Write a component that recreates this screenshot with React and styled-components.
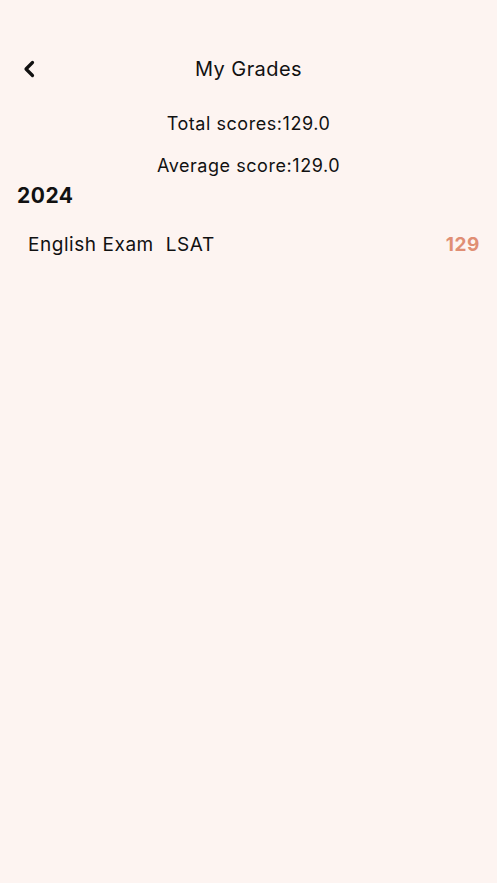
import React from "react";
import styled, { createGlobalStyle } from "styled-components";

const Global = createGlobalStyle`
  html, body { margin: 0; padding: 0; background: #fdf4f1; }
  body { font-family: Inter, "Noto Sans", sans-serif; color: #111; }
`;

const Page = styled.div`
  min-height: 883px;
  background: #fdf4f1;
  display: flex;
  flex-direction: column;
`;

const NavBar = styled.div`
  height: 44px;
  margin-top: 47px;
  display: grid;
  grid-template-columns: 60px 1fr 60px;
  align-items: center;
`;

const BackButton = styled.button`
  border: none;
  background: none;
  padding: 0 0 0 22px;
  display: flex;
  align-items: center;
  cursor: pointer;
`;

const Title = styled.div`
  text-align: center;
  font-size: 20px;
  letter-spacing: 0.45px;
  color: #111;
`;

const Summary = styled.div`
  text-align: center;
  font-size: 18px;
  letter-spacing: 0.55px;
  line-height: 22px;
  margin-top: ${(p) => p.$top}px;
`;

const Year = styled.div`
  font-size: 21px;
  font-weight: 700;
  letter-spacing: 0.5px;
  margin: 6px 0 0 17px;
  line-height: 26px;
`;

const Row = styled.div`
  display: flex;
  align-items: center;
  padding: 0 17px 0 28px;
  margin-top: 24px;
  font-size: 19px;
  line-height: 24px;
`;

const Exam = styled.span`
  letter-spacing: 0.55px;
`;

const Type = styled.span`
  margin-left: 12px;
  letter-spacing: 0.55px;
`;

const Score = styled.span`
  margin-left: auto;
  color: #e08e74;
  font-weight: 700;
  letter-spacing: 0.6px;
`;

export default function App() {
  return (
    <>
      <Global />
      <Page>
        <NavBar>
          <BackButton aria-label="back">
            <svg width="14" height="18" viewBox="0 0 14 18">
              <path d="M10.5 2.5 L4 9 L10.5 15.5" fill="none" stroke="#111" strokeWidth="3.2" strokeLinecap="round" strokeLinejoin="round" />
            </svg>
          </BackButton>
          <Title>My Grades</Title>
          <div />
        </NavBar>
        <Summary $top={22}>Total scores:129.0</Summary>
        <Summary $top={20}>Average score:129.0</Summary>
        <Year>2024</Year>
        <Row>
          <Exam>English Exam</Exam>
          <Type>LSAT</Type>
          <Score>129</Score>
        </Row>
      </Page>
    </>
  );
}
